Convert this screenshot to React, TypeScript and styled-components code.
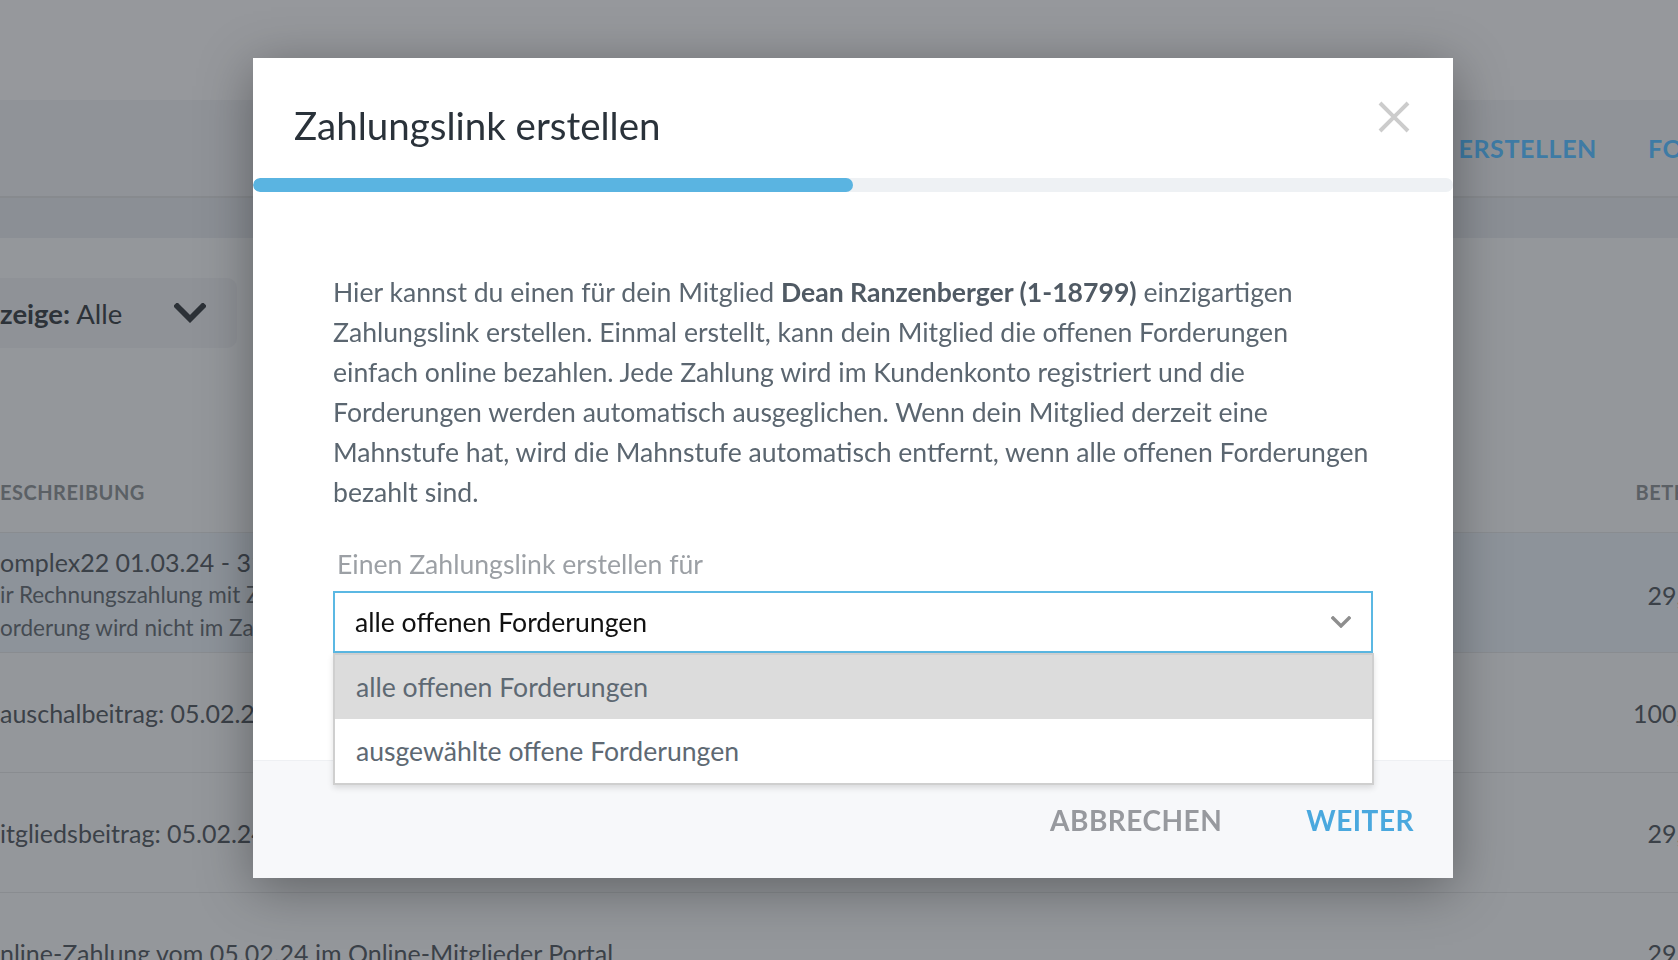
import styled, { createGlobalStyle } from 'styled-components';

const GlobalStyle = createGlobalStyle`
  html, body {
    margin: 0;
    padding: 0;
    overflow: hidden;
  }
  body {
    font-family: Lato, "Liberation Sans", sans-serif;
  }
`;

// dimmed page behind the modal
const Page = styled.div`
  width: 100%;
  height: 100vh;
  overflow: hidden;
  background: #94979b;
  color: #3b4148;
`;

const TopStrip = styled.div`
  height: 100px;
  background: #96989c;
`;

const NavBar = styled.div`
  height: 96px;
  display: flex;
  align-items: center;
  background: #909398;
  border-bottom: 2px solid #878a8e;
  white-space: nowrap;
`;

const NavSlot = styled.div`
  flex: 0 0 1597px;
  text-align: right;
  overflow: hidden;
`;

const NavLink = styled.span<{ $first?: boolean }>`
  margin-left: ${(p) => (p.$first ? '0' : '51px')};
  font-size: 25px;
  font-weight: 700;
  letter-spacing: 0.6px;
  color: #3e7ba5;
`;

const SubBar = styled.div`
  height: 40px;
  background: #8b8f95;
`;

const Content = styled.div`
  padding-top: 40px;
`;

const FilterBox = styled.div`
  width: 237px;
  height: 70px;
  box-sizing: border-box;
  display: flex;
  align-items: center;
  justify-content: space-between;
  padding-right: 31px;
  background: #8f9297;
  border-radius: 0 10px 10px 0;
  font-size: 27.5px;
  color: #2d3339;
  b {
    font-weight: 700;
  }
`;

const Table = styled.div`
  margin-top: 110px;
  width: 1760px;
`;

const HeadRow = styled.div`
  display: grid;
  grid-template-columns: 1fr 240px;
  padding: 22px 0 28px;
  line-height: 24px;
  font-size: 20px;
  font-weight: 700;
  letter-spacing: 0.5px;
  color: #5b6065;
`;

const HeadAmount = styled.div`
  text-align: right;
  padding-right: 44px;
`;

const Row = styled.div<{ $active?: boolean }>`
  display: grid;
  grid-template-columns: 1fr 240px;
  align-items: center;
  height: 120px;
  box-sizing: border-box;
  padding-top: ${(p) => (p.$active ? '4px' : '0')};
  background: ${(p) => (p.$active ? '#8d939a' : 'transparent')};
  border-top: 1px solid #898c90;
`;

const RowTitle = styled.div`
  font-size: 25px;
  line-height: 32px;
  white-space: nowrap;
`;

const RowNote = styled.div`
  font-size: 22.5px;
  line-height: 33px;
  color: #454b52;
  white-space: nowrap;
`;

const Amount = styled.div`
  font-size: 25px;
  text-align: right;
  padding-right: 28px;
`;

// modal
const Overlay = styled.div`
  position: fixed;
  inset: 0;
`;

const Modal = styled.div`
  position: absolute;
  top: 58px;
  left: 253px;
  width: 1200px;
  background: #fff;
  box-shadow: 0 10px 50px rgba(0, 0, 0, 0.35);
`;

const ModalHeader = styled.div`
  position: relative;
  height: 120px;
  box-sizing: border-box;
  padding: 44px 41px 0;
`;

const Title = styled.h2`
  margin: 0;
  font-size: 38.5px;
  font-weight: 400;
  line-height: 1.2;
  color: #2a323a;
`;

const CloseButton = styled.button`
  position: absolute;
  top: 43px;
  right: 43px;
  width: 32px;
  height: 32px;
  padding: 0;
  border: none;
  background: none;
  cursor: pointer;
`;

const Track = styled.div`
  height: 14px;
  border-radius: 7px;
  background: #eef1f4;
  overflow: hidden;
`;

const Fill = styled.div<{ $value: number }>`
  width: ${(p) => p.$value}%;
  height: 100%;
  border-radius: 7px;
  background: #5ab4e1;
`;

const Body = styled.div`
  padding: 80px 80px 107px;
`;

const Intro = styled.p`
  margin: 0;
  font-size: 26.6px;
  line-height: 40px;
  color: #5b6670;
  white-space: nowrap;
  strong {
    font-weight: 700;
    color: #505a64;
  }
`;

const Label = styled.div`
  margin: 37px 0 0 4px;
  font-size: 26.6px;
  line-height: 30px;
  color: #9ca0a5;
`;

const Field = styled.div`
  position: relative;
  margin-top: 12px;
`;

const SelectBox = styled.div`
  height: 62px;
  box-sizing: border-box;
  display: flex;
  align-items: center;
  justify-content: space-between;
  padding: 0 20px 0 20px;
  border: 2px solid #5bb8e3;
  font-size: 26.6px;
  color: #111;
`;

const Menu = styled.div`
  position: absolute;
  top: 62px;
  left: 0;
  right: -1px;
  background: #fff;
  border: 2px solid #cfcfcf;
  box-shadow: 0 3px 6px rgba(0, 0, 0, 0.12);
`;

const MenuItem = styled.div<{ $active?: boolean }>`
  height: 64px;
  display: flex;
  align-items: center;
  padding-left: 21px;
  font-size: 26.6px;
  color: #5e6973;
  background: ${(p) => (p.$active ? '#dcdcdc' : '#fff')};
`;

const Footer = styled.div`
  height: 118px;
  box-sizing: border-box;
  display: flex;
  justify-content: flex-end;
  align-items: center;
  gap: 44px;
  padding: 0 19px 0 0;
  background: #f7f8fa;
  border-top: 1px solid #eef0f3;
`;

const FooterButton = styled.button<{ $primary?: boolean }>`
  padding: 0 20px;
  border: none;
  background: none;
  font-family: inherit;
  font-size: 28px;
  font-weight: 700;
  letter-spacing: 0.5px;
  line-height: 40px;
  color: ${(p) => (p.$primary ? '#4aa8de' : '#97999e')};
  cursor: pointer;
`;

const Chevron = ({ size, color, stroke }: { size: number; color: string; stroke: number }) => (
  <svg width={size} height={size * 0.6} viewBox="0 0 20 12" fill="none">
    <polyline
      points="2,2 10,10 18,2"
      stroke={color}
      strokeWidth={stroke}
      strokeLinecap="square"
      strokeLinejoin="miter"
    />
  </svg>
);

export default function App() {
  return (
    <>
      <GlobalStyle />
      <Page>
        <TopStrip />
        <NavBar>
          <NavSlot>
            <NavLink $first>RECHNUNG ERSTELLEN</NavLink>
          </NavSlot>
          <NavLink>FORDERUNGEN</NavLink>
        </NavBar>
        <SubBar />
        <Content>
          <FilterBox>
            <span>
              <b>zeige:</b> Alle
            </span>
            <Chevron size={32} color="#2c3137" stroke={3.6} />
          </FilterBox>
          <Table>
            <HeadRow>
              <div>ESCHREIBUNG</div>
              <HeadAmount>BETRAG</HeadAmount>
            </HeadRow>
            <Row $active>
              <div>
                <RowTitle>omplex22 01.03.24 - 31.03.24</RowTitle>
                <RowNote>ir Rechnungszahlung mit Zahlungslink</RowNote>
                <RowNote>orderung wird nicht im Zahlungslauf berücksichtigt</RowNote>
              </div>
              <Amount>29,00 €</Amount>
            </Row>
            <Row>
              <RowTitle>auschalbeitrag: 05.02.24</RowTitle>
              <Amount>100,00 €</Amount>
            </Row>
            <Row>
              <RowTitle>itgliedsbeitrag: 05.02.24</RowTitle>
              <Amount>29,00 €</Amount>
            </Row>
            <Row>
              <RowTitle>nline-Zahlung vom 05.02.24 im Online-Mitglieder Portal</RowTitle>
              <Amount>29,00 €</Amount>
            </Row>
          </Table>
        </Content>
      </Page>

      <Overlay>
        <Modal>
          <ModalHeader>
            <Title>Zahlungslink erstellen</Title>
            <CloseButton aria-label="Schließen">
              <svg width="32" height="32" viewBox="0 0 32 32">
                <path d="M2 2 L30 30 M30 2 L2 30" stroke="#cccccc" strokeWidth="4" />
              </svg>
            </CloseButton>
          </ModalHeader>
          <Track>
            <Fill $value={50} />
          </Track>
          <Body>
            <Intro>
              Hier kannst du einen für dein Mitglied <strong>Dean Ranzenberger (1-18799)</strong> einzigartigen
              <br />
              Zahlungslink erstellen. Einmal erstellt, kann dein Mitglied die offenen Forderungen
              <br />
              einfach online bezahlen. Jede Zahlung wird im Kundenkonto registriert und die
              <br />
              Forderungen werden automatisch ausgeglichen. Wenn dein Mitglied derzeit eine
              <br />
              Mahnstufe hat, wird die Mahnstufe automatisch entfernt, wenn alle offenen Forderungen
              <br />
              bezahlt sind.
            </Intro>
            <Label>Einen Zahlungslink erstellen für</Label>
            <Field>
              <SelectBox>
                <span>alle offenen Forderungen</span>
                <Chevron size={20} color="#8e8e8e" stroke={3.4} />
              </SelectBox>
              <Menu>
                <MenuItem $active>alle offenen Forderungen</MenuItem>
                <MenuItem>ausgewählte offene Forderungen</MenuItem>
              </Menu>
            </Field>
          </Body>
          <Footer>
            <FooterButton>ABBRECHEN</FooterButton>
            <FooterButton $primary>WEITER</FooterButton>
          </Footer>
        </Modal>
      </Overlay>
    </>
  );
}
